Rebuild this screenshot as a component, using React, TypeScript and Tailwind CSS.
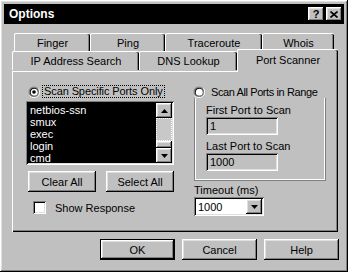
import React from "react";

// classic 3d borders
const raised =
  "shadow-[inset_-1px_-1px_0_#000,inset_1px_1px_0_#fff,inset_-2px_-2px_0_#808080,inset_2px_2px_0_#dfdfdf]";
const sunken =
  "shadow-[inset_1px_1px_0_#808080,inset_-1px_-1px_0_#fff,inset_2px_2px_0_#000,inset_-2px_-2px_0_#dfdfdf]";

function Radio({ checked }: { checked?: boolean }) {
  return (
    <svg width="12" height="12" viewBox="0 0 12 12" className="shrink-0">
      <circle cx="6" cy="6" r="5.5" fill="#808080" />
      <path d="M1.5 9.5 A5.5 5.5 0 0 0 10.5 2.5" stroke="#fff" strokeWidth="1" fill="none" />
      <circle cx="6" cy="6" r="4" fill="#000" />
      <circle cx="6.3" cy="6.3" r="3.5" fill="#fff" />
      {checked && <circle cx="6" cy="6" r="1.8" fill="#000" />}
    </svg>
  );
}

function Arrow({ down }: { down?: boolean }) {
  return (
    <svg width="7" height="4" viewBox="0 0 7 4">
      <path d={down ? "M0 0 H7 L3.5 4 Z" : "M0 4 H7 L3.5 0 Z"} fill="#000" />
    </svg>
  );
}

function Tab({ label, width, active, short }: { label: string; width: number; active?: boolean; short?: boolean }) {
  return (
    <div
      className={`flex items-center justify-center bg-[#c0c0c0] border-t border-l border-white rounded-t-[2px] shadow-[inset_-1px_0_0_#000,inset_-2px_0_0_#808080] ${
        active ? "h-[23px] -mt-[3px] relative top-[1px] z-10 pb-[3px]" : short ? "h-[18px]" : "h-[19px]"
      }`}
      style={{ width }}
    >
      {label}
    </div>
  );
}

function Button({ label, w, def }: { label: string; w: string; def?: boolean }) {
  return (
    <div className={`${w} h-[21px] ${def ? "border border-black" : ""}`}>
      <div className={`w-full h-full flex items-center justify-center bg-[#c0c0c0] ${raised}`}>{label}</div>
    </div>
  );
}

export default function App() {
  const ports = ["netbios-ssn", "smux", "exec", "login", "cmd"];
  return (
    <div className="w-[351px] h-[275px] bg-white font-['Liberation_Sans',Arial,sans-serif] text-[11px] text-black leading-[12px] whitespace-nowrap">
      <div className={`w-[348px] h-[272px] bg-[#c0c0c0] px-[4px] pt-[4px] ${raised}`}>
        {/* title bar */}
        <div className="h-[20px] bg-black flex items-center justify-between pl-[5px] pr-[2px]">
          <span className="text-white font-bold text-[12px]">Options</span>
          <div className="flex gap-[2px]">
            <div className={`w-[16px] h-[14px] bg-[#c0c0c0] flex items-center justify-center font-bold text-[11px] ${raised}`}>
              ?
            </div>
            <div className={`w-[16px] h-[14px] bg-[#c0c0c0] flex items-center justify-center ${raised}`}>
              <svg width="8" height="7" viewBox="0 0 8 7">
                <path d="M0.5 0.5 L7.5 6.5 M7.5 0.5 L0.5 6.5" stroke="#000" strokeWidth="1.6" />
              </svg>
            </div>
          </div>
        </div>

        {/* tabs + page */}
        <div className="mt-[9px] ml-[8px] w-[326px]">
          <div className="flex pl-[2px]">
            <Tab label="Finger" width={76} short />
            <Tab label="Ping" width={75} short />
            <Tab label="Traceroute" width={97} short />
            <Tab label="Whois" width={72} short />
          </div>
          <div className="flex">
            <Tab label="IP Address Search" width={127} />
            <Tab label="DNS Lookup" width={98} />
            <Tab label="Port Scanner" width={101} active />
          </div>
          <div className="h-[161px] border-l border-t border-white shadow-[inset_-1px_-1px_0_#000,inset_-2px_-2px_0_#808080] flex pl-[13px] pt-[13px]">
            {/* left column */}
            <div className="w-[148px] flex flex-col">
              <div className="h-[13px] flex items-center">
                <div className="ml-[2px]">
                  <Radio checked />
                </div>
                <span className="ml-[2px] border border-dotted border-black px-[1px] leading-[11px] tracking-[-0.1px]">
                  Scan Specific Ports Only
                </span>
              </div>
              <div className={`mt-[3px] h-[64px] bg-black flex p-[2px] ${sunken}`}>
                <div className="flex-1 overflow-hidden text-white pl-[2px] pt-[1px]">
                  {ports.map((p) => (
                    <div key={p} className="h-[12px] leading-[12px]">
                      {p}
                    </div>
                  ))}
                </div>
                <div className="w-[16px] flex flex-col">
                  <div className={`h-[15px] bg-[#c0c0c0] flex items-center justify-center ${raised}`}>
                    <Arrow />
                  </div>
                  <div className="flex-1 bg-[#c8c8c8] border border-dotted border-white" />
                  <div className={`h-[7px] bg-[#c0c0c0] ${raised}`} />
                  <div className={`h-[15px] bg-[#c0c0c0] flex items-center justify-center ${raised}`}>
                    <Arrow down />
                  </div>
                </div>
              </div>
              <div className="mt-[6px] ml-[2px] flex gap-[10px]">
                <Button label="Clear All" w="w-[68px]" />
                <Button label="Select All" w="w-[68px]" />
              </div>
              <div className="mt-[9px] ml-[7px] flex items-center gap-[9px]">
                <div className={`w-[13px] h-[13px] bg-white ${sunken}`} />
                <span>Show Response</span>
              </div>
            </div>

            {/* right column */}
            <div className="ml-[19px] w-[133px] flex flex-col">
              <div className="h-[13px] flex items-center">
                <Radio />
                <span className="ml-[6px] tracking-[-0.4px]">Scan All Ports in Range</span>
              </div>
              <div className="ml-[1px] w-[132px] h-[83px] border-l border-r border-b border-[#808080] shadow-[inset_1px_0_0_#fff,inset_-1px_-1px_0_#fff] pl-[11px] pt-[7px] flex flex-col">
                <span className="h-[11px] leading-[11px]">First Port to Scan</span>
                <div className={`mt-[1px] w-[72px] h-[18px] bg-[#c0c0c0] flex items-center pl-[4px] ${sunken}`}>1</div>
                <span className="mt-[6px] h-[11px] leading-[11px]">Last Port to Scan</span>
                <div className={`mt-[1px] w-[72px] h-[18px] bg-[#c0c0c0] flex items-center pl-[4px] ${sunken}`}>1000</div>
              </div>
              <span className="mt-[3px] ml-[1px] h-[12px]">Timeout (ms)</span>
              <div className={`mt-[1px] ml-[1px] w-[70px] h-[19px] bg-white flex items-center justify-between pl-[4px] pr-[2px] ${sunken}`}>
                <span>1000</span>
                <div className={`w-[16px] h-[15px] bg-[#c0c0c0] flex items-center justify-center ${raised}`}>
                  <Arrow down />
                </div>
              </div>
            </div>
          </div>
        </div>

        {/* dialog buttons */}
        <div className="mt-[7px] ml-[96px] flex gap-[7px]">
          <Button label="OK" w="w-[75px]" def />
          <Button label="Cancel" w="w-[75px]" />
          <Button label="Help" w="w-[75px]" />
        </div>
      </div>
    </div>
  );
}
